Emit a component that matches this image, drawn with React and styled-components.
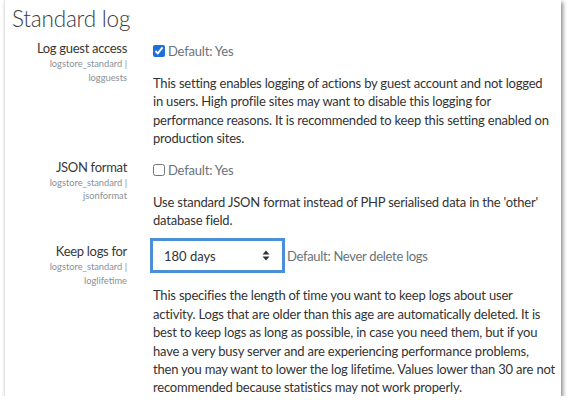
import React from "react";
import styled, { createGlobalStyle } from "styled-components";

const GlobalStyle = createGlobalStyle`
  body {
    margin: 0;
    background: #fff;
    font-family: Lato, "Open Sans", sans-serif;
  }
`;

const Card = styled.div`
  margin-left: 4px;
  width: 557px;
  height: 396px;
  background: #fff;
  border-left: 1px solid #e4e4e4;
  box-shadow: 2px 2px 4px rgba(0, 0, 0, 0.45);
  box-sizing: border-box;
`;

const Title = styled.h2`
  margin: 0;
  padding: 4px 0 0 7px;
  font-size: 22.5px;
  font-weight: 300;
  letter-spacing: -0.2px;
  color: #3a3a3a;
  line-height: 30px;
`;

const Setting = styled.div`
  display: grid;
  grid-template-columns: 122px 1fr;
  column-gap: 26px;
  margin-top: ${(p) => p.gap}px;
`;

const LabelCol = styled.div`
  text-align: right;
`;

const Label = styled.div`
  font-size: 13px;
  letter-spacing: -0.3px;
  line-height: 16px;
  color: #383838;
`;

const Key = styled.div`
  margin-top: 2px;
  font-size: 9.3px;
  line-height: 11.5px;
  color: #8a9096;
`;

const Field = styled.div`
  padding-right: 6px;
`;

const DefaultRow = styled.label`
  display: flex;
  align-items: center;
  gap: 3px;
  font-size: 13px;
  letter-spacing: -0.2px;
  color: #6a737b;
  height: 20px;
  margin-top: 1px;
`;

const Check = styled.input`
  margin: 0;
  width: 12px;
  height: 12px;
  accent-color: #1f6fd8;
`;

const Description = styled.p`
  margin: 13px 0 0;
  font-size: 13px;
  letter-spacing: -0.2px;
  line-height: 18.4px;
  color: #333;
`;

const SelectRow = styled.div`
  display: flex;
  align-items: center;
  gap: 2px;
  margin: -5px 0 0 -3px;
  font-size: 13px;
  letter-spacing: -0.3px;
  color: #6a737b;
`;

const SelectBox = styled.div`
  width: 135px;
  height: 35px;
  box-sizing: border-box;
  border: 3px solid #4a8fd8;
  display: flex;
  align-items: center;
  justify-content: space-between;
  padding: 0 12px 0 11px;
  font-size: 13px;
  letter-spacing: 0;
  color: #333;
`;

function Arrows() {
  return (
    <svg width="8" height="11" viewBox="0 0 8 11">
      <path d="M4 0.5 L7.5 4.5 H0.5 Z" fill="#333" />
      <path d="M4 10.5 L7.5 6.5 H0.5 Z" fill="#333" />
    </svg>
  );
}

export default function App() {
  return (
    <>
      <GlobalStyle />
      <Card>
        <Title>Standard log</Title>
        <Setting gap={6}>
          <LabelCol>
            <Label>Log guest access</Label>
            <Key>logstore_standard |</Key>
            <Key>logguests</Key>
          </LabelCol>
          <Field>
            <DefaultRow>
              <Check type="checkbox" defaultChecked />
              Default: Yes
            </DefaultRow>
            <Description>
              This setting enables logging of actions by guest account and not logged
              in users. High profile sites may want to disable this logging for
              performance reasons. It is recommended to keep this setting enabled on
              production sites.
            </Description>
          </Field>
        </Setting>
        <Setting gap={11}>
          <LabelCol>
            <Label>JSON format</Label>
            <Key>logstore_standard |</Key>
            <Key>jsonformat</Key>
          </LabelCol>
          <Field>
            <DefaultRow>
              <Check type="checkbox" />
              Default: Yes
            </DefaultRow>
            <Description>
              Use standard JSON format instead of PHP serialised data in the 'other'
              database field.
            </Description>
          </Field>
        </Setting>
        <Setting gap={14}>
          <LabelCol>
            <Label>Keep logs for</Label>
            <Key>logstore_standard |</Key>
            <Key>loglifetime</Key>
          </LabelCol>
          <Field>
            <SelectRow>
              <SelectBox>
                180 days
                <Arrows />
              </SelectBox>
              Default: Never delete logs
            </SelectRow>
            <Description>
              This specifies the length of time you want to keep logs about user
              activity. Logs that are older than this age are automatically deleted. It is
              best to keep logs as long as possible, in case you need them, but if you
              have a very busy server and are experiencing performance problems,
              then you may want to lower the log lifetime. Values lower than 30 are not
              recommended because statistics may not work properly.
            </Description>
          </Field>
        </Setting>
      </Card>
    </>
  );
}
